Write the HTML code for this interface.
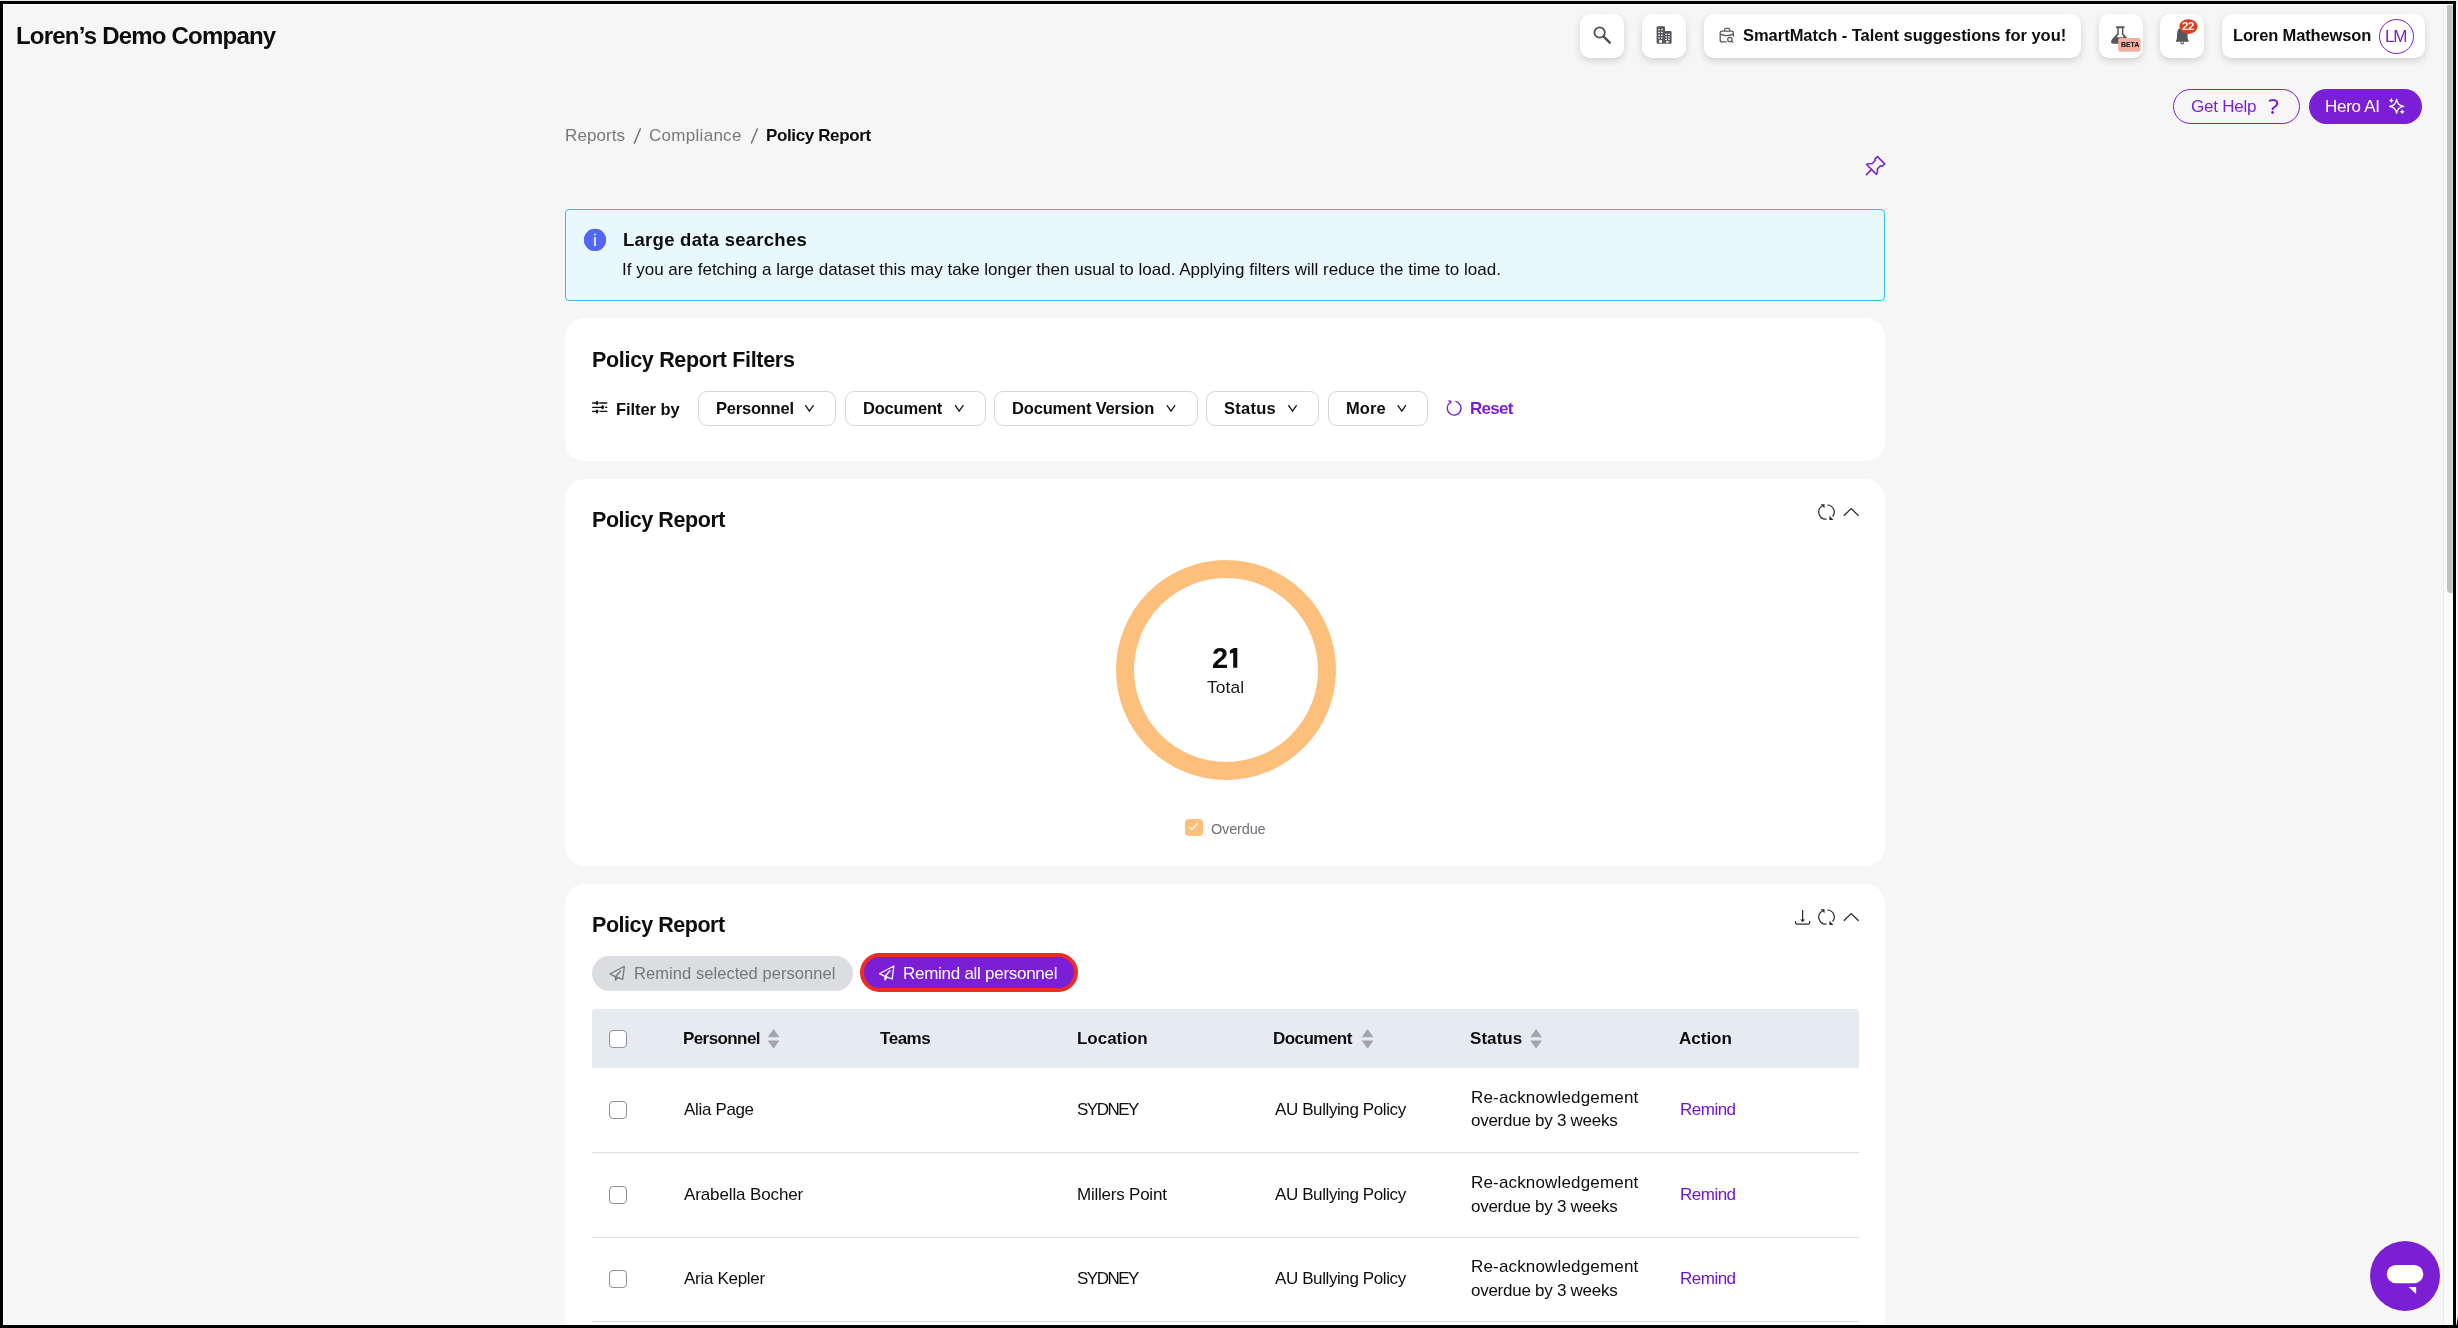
<!DOCTYPE html>
<html><head><meta charset="utf-8">
<style>
*{box-sizing:border-box;margin:0;padding:0}
html,body{width:2458px;height:1328px;overflow:hidden;background:#e9eae6;font-family:"Liberation Sans",sans-serif;color:#0d0d0d;position:relative}
.frame{position:absolute;left:0;top:1px;width:2456px;height:1327px;border:3px solid #000;background:#fff}
.clip{position:absolute;left:4px;top:5px;width:2449px;height:1319px;overflow:hidden;background:#f6f6f6}
.pg{position:absolute;left:-4px;top:-5px;width:2458px;height:1328px}
.track{position:absolute;left:2443px;top:0;width:10px;height:1328px;background:#fafafa;border-left:1px solid #e8e8e8}
.thumb{position:absolute;left:2447px;top:5px;width:6px;height:588px;background:#c1c1c1;border-radius:0 0 0 4px;border-right:1px solid #cfcfcf}
.a{position:absolute;white-space:nowrap;line-height:1;will-change:transform}
.b{font-weight:bold}
.card{position:absolute;background:#fff;border-radius:20px;left:565px;width:1320px}
.tb{position:absolute;background:#fff;border-radius:10px;box-shadow:0 3px 7px rgba(0,0,0,.15);top:14px;height:44px}
.fbtn{position:absolute;top:391px;height:35px;border:1px solid #d6d6d9;border-radius:9px;background:#fff}
.cb{position:absolute;width:18px;height:18px;border:1px solid #8e9197;border-radius:4px;background:#fff}
.hr{position:absolute;left:592px;width:1267px;height:1px;background:#dcdde1}
svg{position:absolute;overflow:visible}
</style></head><body>
<div class="frame"></div>
<div style="position:absolute;left:2456px;top:4px;width:1px;height:1318px;background:#fff"></div>
<div style="position:absolute;left:2456px;top:1325px;width:2px;height:3px;background:#000"></div>
<svg style="position:absolute;left:0;top:0;overflow:visible" width="1" height="1"><path d="M2458 1316 L2458 1325 L2456.6 1325 Z" fill="#000"/></svg>
<div class="clip"><div class="pg">

<div class="tb" style="left:1580px;width:44px"></div>
<div class="tb" style="left:1642px;width:44px"></div>
<div class="tb" style="left:1704px;width:377px"></div>
<div class="tb" style="left:2099px;width:44px"></div>
<div class="tb" style="left:2160px;width:44px"></div>
<div class="tb" style="left:2222px;width:203px"></div>
<div style="position:absolute;left:2379px;top:19px;width:35px;height:35px;border:1px solid #7a1fd5;border-radius:50%"></div>

<div style="position:absolute;left:2173px;top:89px;width:127px;height:35px;border:1px solid #7a1fd5;border-radius:18px"></div>
<div style="position:absolute;left:2309px;top:89px;width:113px;height:35px;background:#7a1fd5;border-radius:18px"></div>

<div style="position:absolute;left:565px;top:209px;width:1320px;height:92px;background:#e9f8fd;border:1px solid #3db9e9;border-radius:4px"></div>
<div style="position:absolute;left:584px;top:229px;width:22px;height:22px;border-radius:50%;background:#5a68e8"></div>

<div class="card" style="top:318px;height:143px"></div>
<div class="fbtn" style="left:698px;width:138px"></div>
<div class="fbtn" style="left:845px;width:141px"></div>
<div class="fbtn" style="left:994px;width:204px"></div>
<div class="fbtn" style="left:1206px;width:113px"></div>
<div class="fbtn" style="left:1328px;width:100px"></div>

<div class="card" style="top:479px;height:387px"></div>
<div style="position:absolute;left:1116px;top:560px;width:220px;height:220px;border-radius:50%;border:18px solid #fdc07c"></div>
<div style="position:absolute;left:1185px;top:819px;width:18px;height:17px;border-radius:4px;background:#fdc07c"></div>

<div class="card" style="top:884px;height:460px"></div>
<div style="position:absolute;left:592px;top:956px;width:261px;height:35px;border-radius:18px;background:#dcdde1"></div>
<div style="position:absolute;left:860px;top:953px;width:218px;height:39px;border-radius:20px;background:#7a1fd5;border:4px solid #ee2c22"></div>

<div style="position:absolute;left:592px;top:1009px;width:1267px;height:59px;background:#e6eaf1;border-radius:4px 4px 0 0"></div>
<div class="cb" style="left:609px;top:1030px"></div>
<div class="hr" style="top:1152px"></div>
<div class="hr" style="top:1237px"></div>
<div class="hr" style="top:1321px"></div>
<div class="cb" style="left:609px;top:1101px"></div>
<div class="cb" style="left:609px;top:1186px"></div>
<div class="cb" style="left:609px;top:1270px"></div>

<!-- search -->
<svg style="left:0;top:0" width="1" height="1">
 <circle cx="1599.6" cy="32.5" r="5.2" fill="none" stroke="#4d4f54" stroke-width="1.8"/>
 <line x1="1603.7" y1="36.6" x2="1609.8" y2="42.7" stroke="#4d4f54" stroke-width="2.4" stroke-linecap="round"/>
</svg>
<!-- building -->
<svg style="left:0;top:0" width="1" height="1">
 <rect x="1656.6" y="26.2" width="8.4" height="17.6" rx="1.3" fill="#55575c"/>
 <rect x="1664.3" y="31.1" width="7.3" height="12.7" rx="1.3" fill="#55575c"/>
 <g fill="#fff">
  <rect x="1658.3" y="28.9" width="1.5" height="1.3"/><rect x="1661.1" y="28.9" width="1.5" height="1.3"/>
  <rect x="1658.3" y="31.8" width="1.5" height="1.3"/><rect x="1661.1" y="31.8" width="1.5" height="1.3"/>
  <rect x="1658.3" y="34.6" width="1.5" height="1.3"/><rect x="1661.1" y="34.6" width="1.5" height="1.3"/>
  <rect x="1658.3" y="37.4" width="1.5" height="1.3"/><rect x="1661.1" y="37.4" width="1.5" height="1.3"/>
  <rect x="1659.2" y="40.1" width="2.8" height="2.7"/>
  <rect x="1665.4" y="33.7" width="1.5" height="1.3"/><rect x="1668.2" y="33.7" width="1.5" height="1.3"/>
  <rect x="1665.4" y="36.3" width="1.5" height="1.3"/><rect x="1668.2" y="36.3" width="1.5" height="1.3"/>
  <rect x="1665.4" y="38.7" width="1.5" height="1.3"/><rect x="1668.2" y="38.7" width="1.5" height="1.3"/>
  <rect x="1666.2" y="40.9" width="2.4" height="1.9"/>
 </g>
</svg>
<!-- smartmatch briefcase -->
<svg style="left:0;top:0" width="1" height="1">
 <g fill="none" stroke="#5a5c61" stroke-width="1.3" stroke-linecap="round" stroke-linejoin="round">
  <path d="M1724.6 30.6 V29.4 Q1724.6 28.4 1725.6 28.4 H1728.7 Q1729.6 28.4 1729.6 29.4 V30.6"/>
  <path d="M1726.2 41.9 H1722 Q1720.2 41.9 1720.2 40 V32.6 Q1720.2 31.2 1721.6 31.2 H1731.9 Q1733.3 31.2 1733.3 32.6 V36.3"/>
  <path d="M1720.3 34.2 Q1726.8 37.2 1733.2 34.2"/>
  <circle cx="1729.9" cy="39.5" r="2.2"/>
  <path d="M1731.5 41.1 L1732.7 42.4"/>
 </g>
</svg>
<!-- flask + beta -->
<svg style="left:0;top:0" width="1" height="1">
 <rect x="2115.9" y="26.3" width="8.7" height="2" rx="0.8" fill="#55575c"/>
 <path d="M2117.3 28 V33.6 L2111.8 39.6 Q2109.6 43.8 2113.8 43.8 H2126.4 Q2130.6 43.8 2128.4 39.6 L2123.4 33.6 V28 Z" fill="#55575c"/>
 <path d="M2118.8 28.3 V34.3 L2116.6 37.2 H2123.9 L2121.9 34.3 V28.3 Z" fill="#fff"/>
 <rect x="2118.2" y="38" width="22.5" height="13.8" rx="2.2" fill="#f1b0a1"/>
</svg>
<div class="a b" style="left:2120.6px;top:40.6px;font-size:7px;letter-spacing:-0.1px;color:#0d0d0d">BETA</div>
<!-- bell -->
<svg style="left:0;top:0" width="1" height="1">
 <path d="M2182.3 27.8 Q2177.3 27.8 2177.1 33.5 L2176.9 38.6 L2175.7 41.7 H2188.9 L2187.7 38.6 L2187.5 33.5 Q2187.3 27.8 2182.3 27.8 Z" fill="#55575c"/>
 <path d="M2180.9 41.8 Q2180.9 43.9 2182.3 43.9 Q2183.7 43.9 2183.7 41.8" fill="none" stroke="#55575c" stroke-width="1.1"/>
 <ellipse cx="2188.45" cy="26.6" rx="9" ry="7.4" fill="#dc3b1c"/>
</svg>
<div class="a b" style="left:2182px;top:20.6px;font-size:11.5px;letter-spacing:-0.3px;color:#fff">22</div>
<!-- sparkle -->
<svg style="left:0;top:0" width="1" height="1">
 <path d="M2396.6 99.3 Q2397.4 105.5 2403.7 106.3 Q2397.4 107.1 2396.6 113.2 Q2395.8 107.1 2389.6 106.3 Q2395.8 105.5 2396.6 99.3 Z" fill="none" stroke="#fff" stroke-width="1.35" stroke-linejoin="round"/>
 <path d="M2391.4 98.1 Q2391.9 100.1 2393.9 100.6 Q2391.9 101.1 2391.4 103.1 Q2390.9 101.1 2388.9 100.6 Q2390.9 100.1 2391.4 98.1 Z" fill="#fff"/>
 <path d="M2402.2 109.2 Q2402.7 111.2 2404.7 111.7 Q2402.7 112.2 2402.2 114.2 Q2401.7 112.2 2399.7 111.7 Q2401.7 111.2 2402.2 109.2 Z" fill="#fff"/>
</svg>
<!-- info -->
<svg style="left:0;top:0" width="1" height="1">
 <circle cx="595" cy="239.85" r="11" fill="#5266f5"/>
 <rect x="593.9" y="237.2" width="2.1" height="8.9" fill="#dde5f8"/>
 <rect x="593.9" y="233.6" width="2.1" height="1.8" fill="#dde5f8"/>
</svg>
<!-- filter sliders -->
<svg style="left:0;top:0" width="1" height="1">
 <g stroke="#111" stroke-width="1.3" stroke-linecap="round">
  <line x1="592.6" y1="403" x2="606.8" y2="403"/>
  <line x1="592.6" y1="407.3" x2="606.8" y2="407.3"/>
  <line x1="592.6" y1="411.4" x2="606.8" y2="411.4"/>
 </g>
 <g stroke="#fff" stroke-width="1.2">
  <line x1="598.5" y1="403" x2="599.6" y2="403"/>
  <line x1="604" y1="407.3" x2="605.1" y2="407.3"/>
  <line x1="598.5" y1="411.4" x2="599.6" y2="411.4"/>
 </g>
 <g fill="#111">
  <rect x="596" y="401" width="2" height="4" rx="1"/>
  <rect x="601.5" y="405.3" width="2.1" height="4" rx="1"/>
  <rect x="596" y="409.4" width="2" height="4" rx="1"/>
 </g>
</svg>
<!-- filter chevrons -->
<svg style="left:0;top:0" width="1" height="1">
 <g fill="none" stroke="#111" stroke-width="1.3" stroke-linecap="round" stroke-linejoin="miter">
  <path d="M805.6 405.6 L809.4 411 L813.2 405.6"/>
  <path d="M955.4 405.6 L959.2 411 L963 405.6"/>
  <path d="M1167.2 405.6 L1171 411 L1174.8 405.6"/>
  <path d="M1288.7 405.6 L1292.5 411 L1296.3 405.6"/>
  <path d="M1398 405.6 L1401.8 411 L1405.6 405.6"/>
 </g>
</svg>
<!-- reset icon -->
<svg style="left:0;top:0" width="1" height="1">
 <path d="M1455.3 401.4 A6.9 6.9 0 1 1 1449.6 403" fill="none" stroke="#7a1fd5" stroke-width="1.4"/>
 <path d="M1447.7 400.4 L1451.3 400.4 L1451.3 404.2 Z" fill="#7a1fd5"/>
</svg>
<!-- pin -->
<svg style="left:0;top:0" width="1" height="1">
 <g fill="none" stroke="#7a1fd5" stroke-width="1.5" stroke-linejoin="round" stroke-linecap="round">
  <path d="M1877.5 156.6 L1884.7 163.9 L1882.2 166.2 L1880.5 165.8 L1877.4 168.9 L1877.5 171 L1876.5 174.4 L1866.5 164.5 L1868.7 163.7 L1872.3 163.4 L1875.4 160.2 L1875 158.9 Z"/>
  <path d="M1871.6 169.4 L1866.4 174.6"/>
 </g>
</svg>
<!-- refresh & chevron (chart) -->
<svg style="left:0;top:0" width="1" height="1">
 <g fill="none" stroke="#2b2b2b" stroke-width="1.2">
  <path d="M1827.3 505 A7 7 0 0 1 1832.6 516.5"/>
  <path d="M1826.6 519 A7 7 0 0 1 1822.3 506"/>
  <path d="M1843.8 515.8 L1851.2 508.6 L1858.6 515.8" stroke-width="1.3"/>
 </g>
 <path d="M1820.6 504.3 L1824.6 504.3 L1824.5 508.2 Z" fill="#2b2b2b"/>
 <path d="M1829.4 515.8 L1829.4 519.9 L1833.5 519.9 Z" fill="#2b2b2b"/>
</svg>
<!-- download, refresh, chevron (table) -->
<svg style="left:0;top:0" width="1" height="1">
 <g fill="none" stroke="#2b2b2b" stroke-width="1.2">
  <path d="M1827.3 910 A7 7 0 0 1 1832.6 921.5"/>
  <path d="M1826.6 924 A7 7 0 0 1 1822.3 911"/>
  <path d="M1843.8 920.8 L1851.2 913.6 L1858.6 920.8" stroke-width="1.3"/>
  <path d="M1802.6 910 V920.5"/>
  <path d="M1795.5 921 V922.6 Q1795.5 924.2 1797.1 924.2 H1808.1 Q1809.7 924.2 1809.7 922.6 V921"/>
 </g>
 <path d="M1820.6 909.3 L1824.6 909.3 L1824.5 913.2 Z" fill="#2b2b2b"/>
 <path d="M1829.4 920.8 L1829.4 924.9 L1833.5 924.9 Z" fill="#2b2b2b"/>
 <path d="M1800.2 919.6 L1805 919.6 L1802.6 922.3 Z" fill="#2b2b2b"/>
</svg>
<!-- legend check -->
<svg style="left:0;top:0" width="1" height="1">
 <path d="M1189.4 827.2 L1192 829.7 L1197.6 823.4" fill="none" stroke="#fff" stroke-width="1.1"/>
</svg>
<!-- paper planes -->
<svg style="left:0;top:0" width="1" height="1">
 <g fill="none" stroke="#75777c" stroke-width="1.3" stroke-linejoin="round" stroke-linecap="round">
  <path d="M624.3 966.3 L610 974 L615.4 976.6 L622.7 979.3 Z"/>
  <path d="M620.6 971 L615.4 976.8 L615.5 980.2 L617.7 977.5"/>
 </g>
 <g fill="none" stroke="#fff" stroke-width="1.3" stroke-linejoin="round" stroke-linecap="round">
  <path d="M893.8 966 L879.5 973.7 L884.9 976.3 L892.2 979 Z"/>
  <path d="M890.1 970.7 L884.9 976.5 L885 979.9 L887.2 977.2"/>
 </g>
</svg>
<!-- sort icons -->
<svg style="left:0;top:0" width="1" height="1">
 <g fill="#a2a5ad" stroke="#a2a5ad" stroke-width="0.8" stroke-linejoin="round">
  <path d="M773.6 1029.6 L778.8 1036.8 H768.4 Z"/><path d="M773.6 1048.1 L778.8 1040.9 H768.4 Z"/>
  <path d="M1367.6 1029.6 L1372.8 1036.8 H1362.4 Z"/><path d="M1367.6 1048.1 L1372.8 1040.9 H1362.4 Z"/>
  <path d="M1536.1 1029.6 L1541.3 1036.8 H1530.9 Z"/><path d="M1536.1 1048.1 L1541.3 1040.9 H1530.9 Z"/>
 </g>
</svg>
<!-- chat widget -->
<svg style="left:0;top:0" width="1" height="1">
 <circle cx="2405" cy="1276" r="35" fill="#7b1fd5"/>
 <rect x="2386.8" y="1264.9" width="36.5" height="18.3" rx="9.1" fill="#fff"/>
 <path d="M2408.8 1286.9 H2416.1 V1294 Z" fill="#fff"/>
</svg>
<!-- digit 1 -->
<svg style="left:0;top:0" width="1" height="1">
 <path d="M1233.7 648 H1237.3 V667.8 H1233.2 V652.7 L1229.9 653.8 V650.3 Z" fill="#0d0d0d"/>
</svg>
<!-- breadcrumb slashes -->
<svg style="left:0;top:0" width="1" height="1">
 <g stroke="#76787d" stroke-width="1.5" stroke-linecap="butt">
  <line x1="640.6" y1="128.2" x2="634.2" y2="143.6"/>
  <line x1="757.6" y1="128.2" x2="751.2" y2="143.6"/>
 </g>
</svg>
<!-- help question mark -->
<svg style="left:0;top:0" width="1" height="1">
 <path d="M2269.8 100.6 Q2273.2 99.5 2275.6 100.5 Q2278.2 102 2276.9 104.8 Q2275.8 106.5 2273.8 107.6 Q2272.7 108.4 2272.6 109.2" fill="none" stroke="#7a1fd5" stroke-width="2" stroke-linecap="round"/>
 <circle cx="2272.6" cy="112.5" r="1.4" fill="#7a1fd5"/>
</svg>

<div class="a b" id="t-company" style="left:16.00px;top:23.61px;font-size:24px;letter-spacing:-0.789px;color:#0d0d0d">Loren’s Demo Company</div>
<div class="a b" id="t-smart" style="left:1743.00px;top:27.19px;font-size:16.5px;letter-spacing:-0.026px;color:#0d0d0d">SmartMatch - Talent suggestions for you!</div>
<div class="a b" id="t-user" style="left:2233.00px;top:26.89px;font-size:16.5px;letter-spacing:-0.143px;color:#0d0d0d">Loren Mathewson</div>
<div class="a" id="t-lm" style="left:2385.20px;top:28.07px;font-size:17px;letter-spacing:-1.200px;color:#7a1fd5">LM</div>
<div class="a" id="t-help" style="left:2191.00px;top:97.71px;font-size:17px;letter-spacing:-0.229px;color:#7a1fd5">Get Help</div>
<div class="a" id="t-hero" style="left:2325.00px;top:97.71px;font-size:17px;letter-spacing:-0.267px;color:#ffffff">Hero AI</div>
<div class="a" id="t-bc1" style="left:564.80px;top:127.24px;font-size:17px;letter-spacing:0.100px;color:#76787d">Reports</div>
<div class="a" id="t-bc3" style="left:649.20px;top:127.24px;font-size:17px;letter-spacing:0.289px;color:#76787d">Compliance</div>
<div class="a b" id="t-bc5" style="left:766.20px;top:127.24px;font-size:17px;letter-spacing:-0.375px;color:#0d0d0d">Policy Report</div>
<div class="a b" id="t-al1" style="left:623.40px;top:230.92px;font-size:18.5px;letter-spacing:0.267px;color:#0d0d0d">Large data searches</div>
<div class="a" id="t-al2" style="left:622.00px;top:260.63px;font-size:17px;letter-spacing:0.008px;color:#0d0d0d">If you are fetching a large dataset this may take longer then usual to load. Applying filters will reduce the time to load.</div>
<div class="a b" id="t-filt" style="left:592.00px;top:350.00px;font-size:21.5px;letter-spacing:-0.310px;color:#0d0d0d">Policy Report Filters</div>
<div class="a b" id="t-fby" style="left:615.70px;top:400.79px;font-size:16.5px;letter-spacing:-0.062px;color:#0d0d0d">Filter by</div>
<div class="a b" id="t-f1" style="left:715.90px;top:400.39px;font-size:16.5px;letter-spacing:-0.225px;color:#0d0d0d">Personnel</div>
<div class="a b" id="t-f2" style="left:862.90px;top:400.39px;font-size:16.5px;letter-spacing:-0.200px;color:#0d0d0d">Document</div>
<div class="a b" id="t-f3" style="left:1012.00px;top:400.39px;font-size:16.5px;letter-spacing:-0.173px;color:#0d0d0d">Document Version</div>
<div class="a b" id="t-f4" style="left:1224.20px;top:400.39px;font-size:16.5px;letter-spacing:0.260px;color:#0d0d0d">Status</div>
<div class="a b" id="t-f5" style="left:1345.60px;top:400.39px;font-size:16.5px;letter-spacing:0.100px;color:#0d0d0d">More</div>
<div class="a b" id="t-reset" style="left:1470.00px;top:400.01px;font-size:17px;letter-spacing:-0.750px;color:#7a1fd5">Reset</div>
<div class="a b" id="t-pr1" style="left:592.00px;top:509.60px;font-size:21.5px;letter-spacing:-0.425px;color:#0d0d0d">Policy Report</div>
<div class="a b" id="t-n21" style="left:1211.90px;top:643.72px;font-size:29px;letter-spacing:-3.700px;color:#0d0d0d">2</div>
<div class="a" id="t-total" style="left:1207.00px;top:678.61px;font-size:17.4px;letter-spacing:0.075px;color:#1a1a1a">Total</div>
<div class="a" id="t-over" style="left:1211.00px;top:821.71px;font-size:14.5px;letter-spacing:-0.167px;color:#6d7075">Overdue</div>
<div class="a b" id="t-pr2" style="left:592.00px;top:914.60px;font-size:21.5px;letter-spacing:-0.450px;color:#0d0d0d">Policy Report</div>
<div class="a" id="t-rs" style="left:634.10px;top:964.89px;font-size:16.5px;letter-spacing:0.063px;color:#75777c">Remind selected personnel</div>
<div class="a" id="t-ra" style="left:903.30px;top:964.71px;font-size:17px;letter-spacing:-0.274px;color:#ffffff">Remind all personnel</div>
<div class="a b" id="t-h1" style="left:682.90px;top:1029.71px;font-size:17px;letter-spacing:-0.588px;color:#0d0d0d">Personnel</div>
<div class="a b" id="t-h2" style="left:880.20px;top:1029.71px;font-size:17px;letter-spacing:-0.475px;color:#0d0d0d">Teams</div>
<div class="a b" id="t-h3" style="left:1076.90px;top:1029.71px;font-size:17px;letter-spacing:-0.029px;color:#0d0d0d">Location</div>
<div class="a b" id="t-h4" style="left:1273.40px;top:1029.71px;font-size:17px;letter-spacing:-0.543px;color:#0d0d0d">Document</div>
<div class="a b" id="t-h5" style="left:1470.40px;top:1029.71px;font-size:17px;letter-spacing:0.060px;color:#0d0d0d">Status</div>
<div class="a b" id="t-h6" style="left:1679.40px;top:1029.71px;font-size:17px;letter-spacing:0.000px;color:#0d0d0d">Action</div>
<div class="a" id="t-r1n" style="left:683.90px;top:1100.71px;font-size:17px;letter-spacing:-0.338px;color:#0d0d0d">Alia Page</div>
<div class="a" id="t-r1l" style="left:1077.20px;top:1100.71px;font-size:17px;letter-spacing:-1.520px;color:#0d0d0d">SYDNEY</div>
<div class="a" id="t-r1d" style="left:1275.20px;top:1100.71px;font-size:17px;letter-spacing:-0.400px;color:#0d0d0d">AU Bullying Policy</div>
<div class="a" id="t-r1s1" style="left:1471.00px;top:1089.11px;font-size:17px;letter-spacing:0.165px;color:#0d0d0d">Re-acknowledgement</div>
<div class="a" id="t-r1s2" style="left:1471.00px;top:1111.81px;font-size:17px;letter-spacing:-0.265px;color:#0d0d0d">overdue by 3 weeks</div>
<div class="a" id="t-r1a" style="left:1680.00px;top:1100.71px;font-size:17px;letter-spacing:-0.500px;color:#7015d6">Remind</div>
<div class="a" id="t-r2n" style="left:683.90px;top:1186.31px;font-size:17px;letter-spacing:-0.121px;color:#0d0d0d">Arabella Bocher</div>
<div class="a" id="t-r2l" style="left:1076.50px;top:1186.31px;font-size:17px;letter-spacing:-0.225px;color:#0d0d0d">Millers Point</div>
<div class="a" id="t-r2d" style="left:1275.20px;top:1186.31px;font-size:17px;letter-spacing:-0.400px;color:#0d0d0d">AU Bullying Policy</div>
<div class="a" id="t-r2s1" style="left:1471.00px;top:1173.81px;font-size:17px;letter-spacing:0.165px;color:#0d0d0d">Re-acknowledgement</div>
<div class="a" id="t-r2s2" style="left:1471.00px;top:1197.81px;font-size:17px;letter-spacing:-0.265px;color:#0d0d0d">overdue by 3 weeks</div>
<div class="a" id="t-r2a" style="left:1680.00px;top:1186.31px;font-size:17px;letter-spacing:-0.500px;color:#7015d6">Remind</div>
<div class="a" id="t-r3n" style="left:683.90px;top:1270.41px;font-size:17px;letter-spacing:-0.300px;color:#0d0d0d">Aria Kepler</div>
<div class="a" id="t-r3l" style="left:1077.20px;top:1270.41px;font-size:17px;letter-spacing:-1.520px;color:#0d0d0d">SYDNEY</div>
<div class="a" id="t-r3d" style="left:1275.20px;top:1270.41px;font-size:17px;letter-spacing:-0.400px;color:#0d0d0d">AU Bullying Policy</div>
<div class="a" id="t-r3s1" style="left:1471.00px;top:1257.81px;font-size:17px;letter-spacing:0.165px;color:#0d0d0d">Re-acknowledgement</div>
<div class="a" id="t-r3s2" style="left:1471.00px;top:1281.81px;font-size:17px;letter-spacing:-0.265px;color:#0d0d0d">overdue by 3 weeks</div>
<div class="a" id="t-r3a" style="left:1680.00px;top:1270.41px;font-size:17px;letter-spacing:-0.500px;color:#7015d6">Remind</div>

<div class="track"></div>
<div class="thumb"></div>
</div></div>
</body></html>
